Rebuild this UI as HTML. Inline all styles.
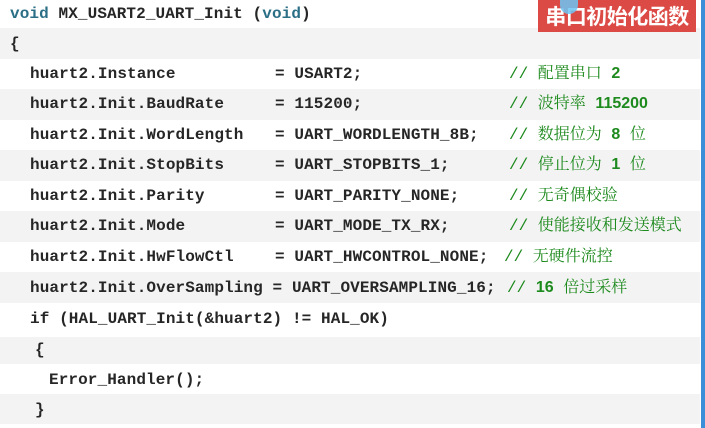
<!DOCTYPE html>
<html><head><meta charset="utf-8"><style>
body{margin:0;width:705px;height:428px;overflow:hidden;background:#fff;position:relative;font-family:"Liberation Mono",monospace;}
.row{position:absolute;left:0;width:700px;height:30.6px;}
.g{background:#f3f3f3;}
.t{position:absolute;font-size:16px;font-weight:bold;color:#262626;white-space:pre;letter-spacing:0.1px;line-height:20px;}
.c{position:absolute;font-size:16px;color:#1d8a1d;white-space:pre;line-height:20px;font-family:"Liberation Mono","Noto Serif CJK SC",serif;}
.c b{font-family:"Liberation Sans",sans-serif;}
.kw{color:#2b6f86;}
</style></head><body>
<div class="row g" style="top:28px"></div>
<div class="row g" style="top:89px"></div>
<div class="row g" style="top:150px"></div>
<div class="row g" style="top:211px"></div>
<div class="row g" style="top:272px"></div>
<div class="row g" style="top:337px;height:27px"></div>
<div class="row g" style="top:394px;height:30px"></div>
<div style="position:absolute;left:701px;top:0;width:4px;height:428px;background:#3a8fd8"></div>

<div class="t" style="left:10px;top:4px"><span class="kw">void</span> MX_USART2_UART_Init (<span class="kw">void</span>)</div>
<div class="t" style="left:10px;top:34px">{</div>

<div class="t" style="left:30px;top:64px">huart2.Instance</div><div class="t" style="left:275px;top:64px">= USART2;</div><div class="c" style="left:509px;top:64px">// 配置串口 <b>2</b></div>
<div class="t" style="left:30px;top:94px">huart2.Init.BaudRate</div><div class="t" style="left:275px;top:94px">= 115200;</div><div class="c" style="left:509px;top:94px">// 波特率 <b>115200</b></div>
<div class="t" style="left:30px;top:125px">huart2.Init.WordLength</div><div class="t" style="left:275px;top:125px">= UART_WORDLENGTH_8B;</div><div class="c" style="left:509px;top:125px">// 数据位为 <b>8</b> 位</div>
<div class="t" style="left:30px;top:155px">huart2.Init.StopBits</div><div class="t" style="left:275px;top:155px">= UART_STOPBITS_1;</div><div class="c" style="left:509px;top:155px">// 停止位为 <b>1</b> 位</div>
<div class="t" style="left:30px;top:186px">huart2.Init.Parity</div><div class="t" style="left:275px;top:186px">= UART_PARITY_NONE;</div><div class="c" style="left:509px;top:186px">// 无奇偶校验</div>
<div class="t" style="left:30px;top:216px">huart2.Init.Mode</div><div class="t" style="left:275px;top:216px">= UART_MODE_TX_RX;</div><div class="c" style="left:509px;top:216px">// 使能接收和发送模式</div>
<div class="t" style="left:30px;top:247px">huart2.Init.HwFlowCtl</div><div class="t" style="left:275px;top:247px">= UART_HWCONTROL_NONE;</div><div class="c" style="left:504px;top:247px">// 无硬件流控</div>
<div class="t" style="left:30px;top:278px">huart2.Init.OverSampling = UART_OVERSAMPLING_16;</div><div class="c" style="left:507px;top:278px">// <b>16</b> 倍过采样</div>
<div class="t" style="left:30px;top:309px">if (HAL_UART_Init(&amp;huart2) != HAL_OK)</div>
<div class="t" style="left:35px;top:340px">{</div>
<div class="t" style="left:49px;top:370px">Error_Handler();</div>
<div class="t" style="left:35px;top:400px">}</div>

<div style="position:absolute;left:538px;top:0;width:158px;height:32px;background:#dc4a45;color:#fff;font-family:'Noto Sans CJK SC',sans-serif;font-weight:bold;font-size:21px;line-height:32px;text-align:center;letter-spacing:-0.5px">串口初始化函数</div>
<div style="position:absolute;left:560px;top:0;width:18px;height:14px;border-radius:0 0 9px 9px;background:#6cc4f5;opacity:.85"></div>
</body></html>
